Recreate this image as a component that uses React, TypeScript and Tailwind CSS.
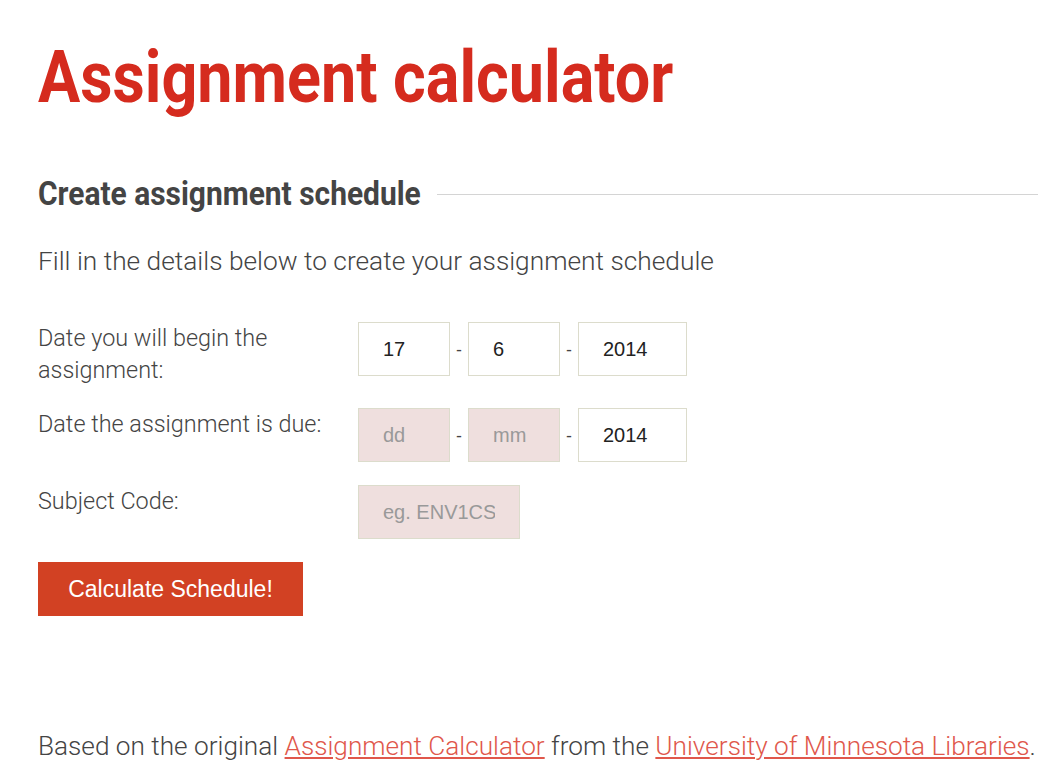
import React from "react";

const DateField = ({ value, placeholder, wide }: { value?: string; placeholder: string; wide?: boolean }) => (
  <input
    type="text"
    defaultValue={value}
    placeholder={placeholder}
    className={`h-[54px] ${wide ? "w-[109px]" : "w-[92px]"} border border-[#dcdccc] px-6 text-[20px] text-[#222] placeholder:text-[#999] outline-none ${
      value ? "bg-white" : "bg-[#efdfde]"
    }`}
    style={{ fontFamily: "'Liberation Sans', Arial, sans-serif" }}
  />
);

const Dash = () => <span className="w-[18px] text-center text-[18px] text-[#444]">-</span>;

export default function App() {
  return (
    <div className="min-h-screen bg-white pl-[38px] font-['Roboto',sans-serif] text-[#444]">
      <h1 className="pt-[34px] text-[72px] font-bold leading-[88px] text-[#d52b1e]">
        <span className="inline-block origin-left scale-x-[0.873] whitespace-nowrap">Assignment calculator</span>
      </h1>

      <div className="mt-[52px] flex items-center">
        <h2 className="shrink-0 text-[33px] font-bold leading-[40px] text-[#444]">
          <span className="inline-block origin-left scale-x-[0.907] whitespace-nowrap">Create assignment schedule</span>
        </h2>
        <div className="ml-[-23px] h-px flex-1 bg-[#d4d4d4]" />
      </div>

      <p className="mt-[29px] whitespace-nowrap text-[26.3px] font-light leading-[36px]">
        Fill in the details below to create your assignment schedule
      </p>

      <div className="mt-[43px] flex flex-col gap-[23px]">
        <div className="flex">
          <label className="w-[320px] text-[23.4px] font-light leading-[32px]">
            Date you will begin the
            <br />
            assignment:
          </label>
          <div className="flex h-[54px] items-center">
            <DateField value="17" placeholder="dd" />
            <Dash />
            <DateField value="6" placeholder="mm" />
            <Dash />
            <DateField value="2014" placeholder="yyyy" wide />
          </div>
        </div>

        <div className="mt-[-1px] flex">
          <label className="w-[320px] text-[23.4px] font-light leading-[32px]">Date the assignment is due:</label>
          <div className="flex items-center">
            <DateField placeholder="dd" />
            <Dash />
            <DateField placeholder="mm" />
            <Dash />
            <DateField value="2014" placeholder="yyyy" wide />
          </div>
        </div>

        <div className="flex">
          <label className="w-[320px] text-[23.4px] font-light leading-[32px]">Subject Code:</label>
          <input
            type="text"
            placeholder="eg. ENV1CS"
            className="h-[54px] w-[162px] border border-[#dcdccc] bg-[#efdfde] px-6 text-[20px] placeholder:text-[#999] outline-none"
            style={{ fontFamily: "'Liberation Sans', Arial, sans-serif" }}
          />
        </div>
      </div>

      <button
        className="mt-[23px] h-[54px] w-[265px] bg-[#d24123] text-[23px] text-white"
        style={{ fontFamily: "'Liberation Sans', Arial, sans-serif" }}
      >
        Calculate Schedule!
      </button>

      <p className="mt-[114px] whitespace-nowrap text-[26.2px] font-light leading-[32px]">
        Based on the original{" "}
        <a href="#" className="text-[#e0574b] underline">
          Assignment Calculator
        </a>{" "}
        from the{" "}
        <a href="#" className="text-[#e0574b] underline">
          University of Minnesota Libraries
        </a>
        .
      </p>
    </div>
  );
}
